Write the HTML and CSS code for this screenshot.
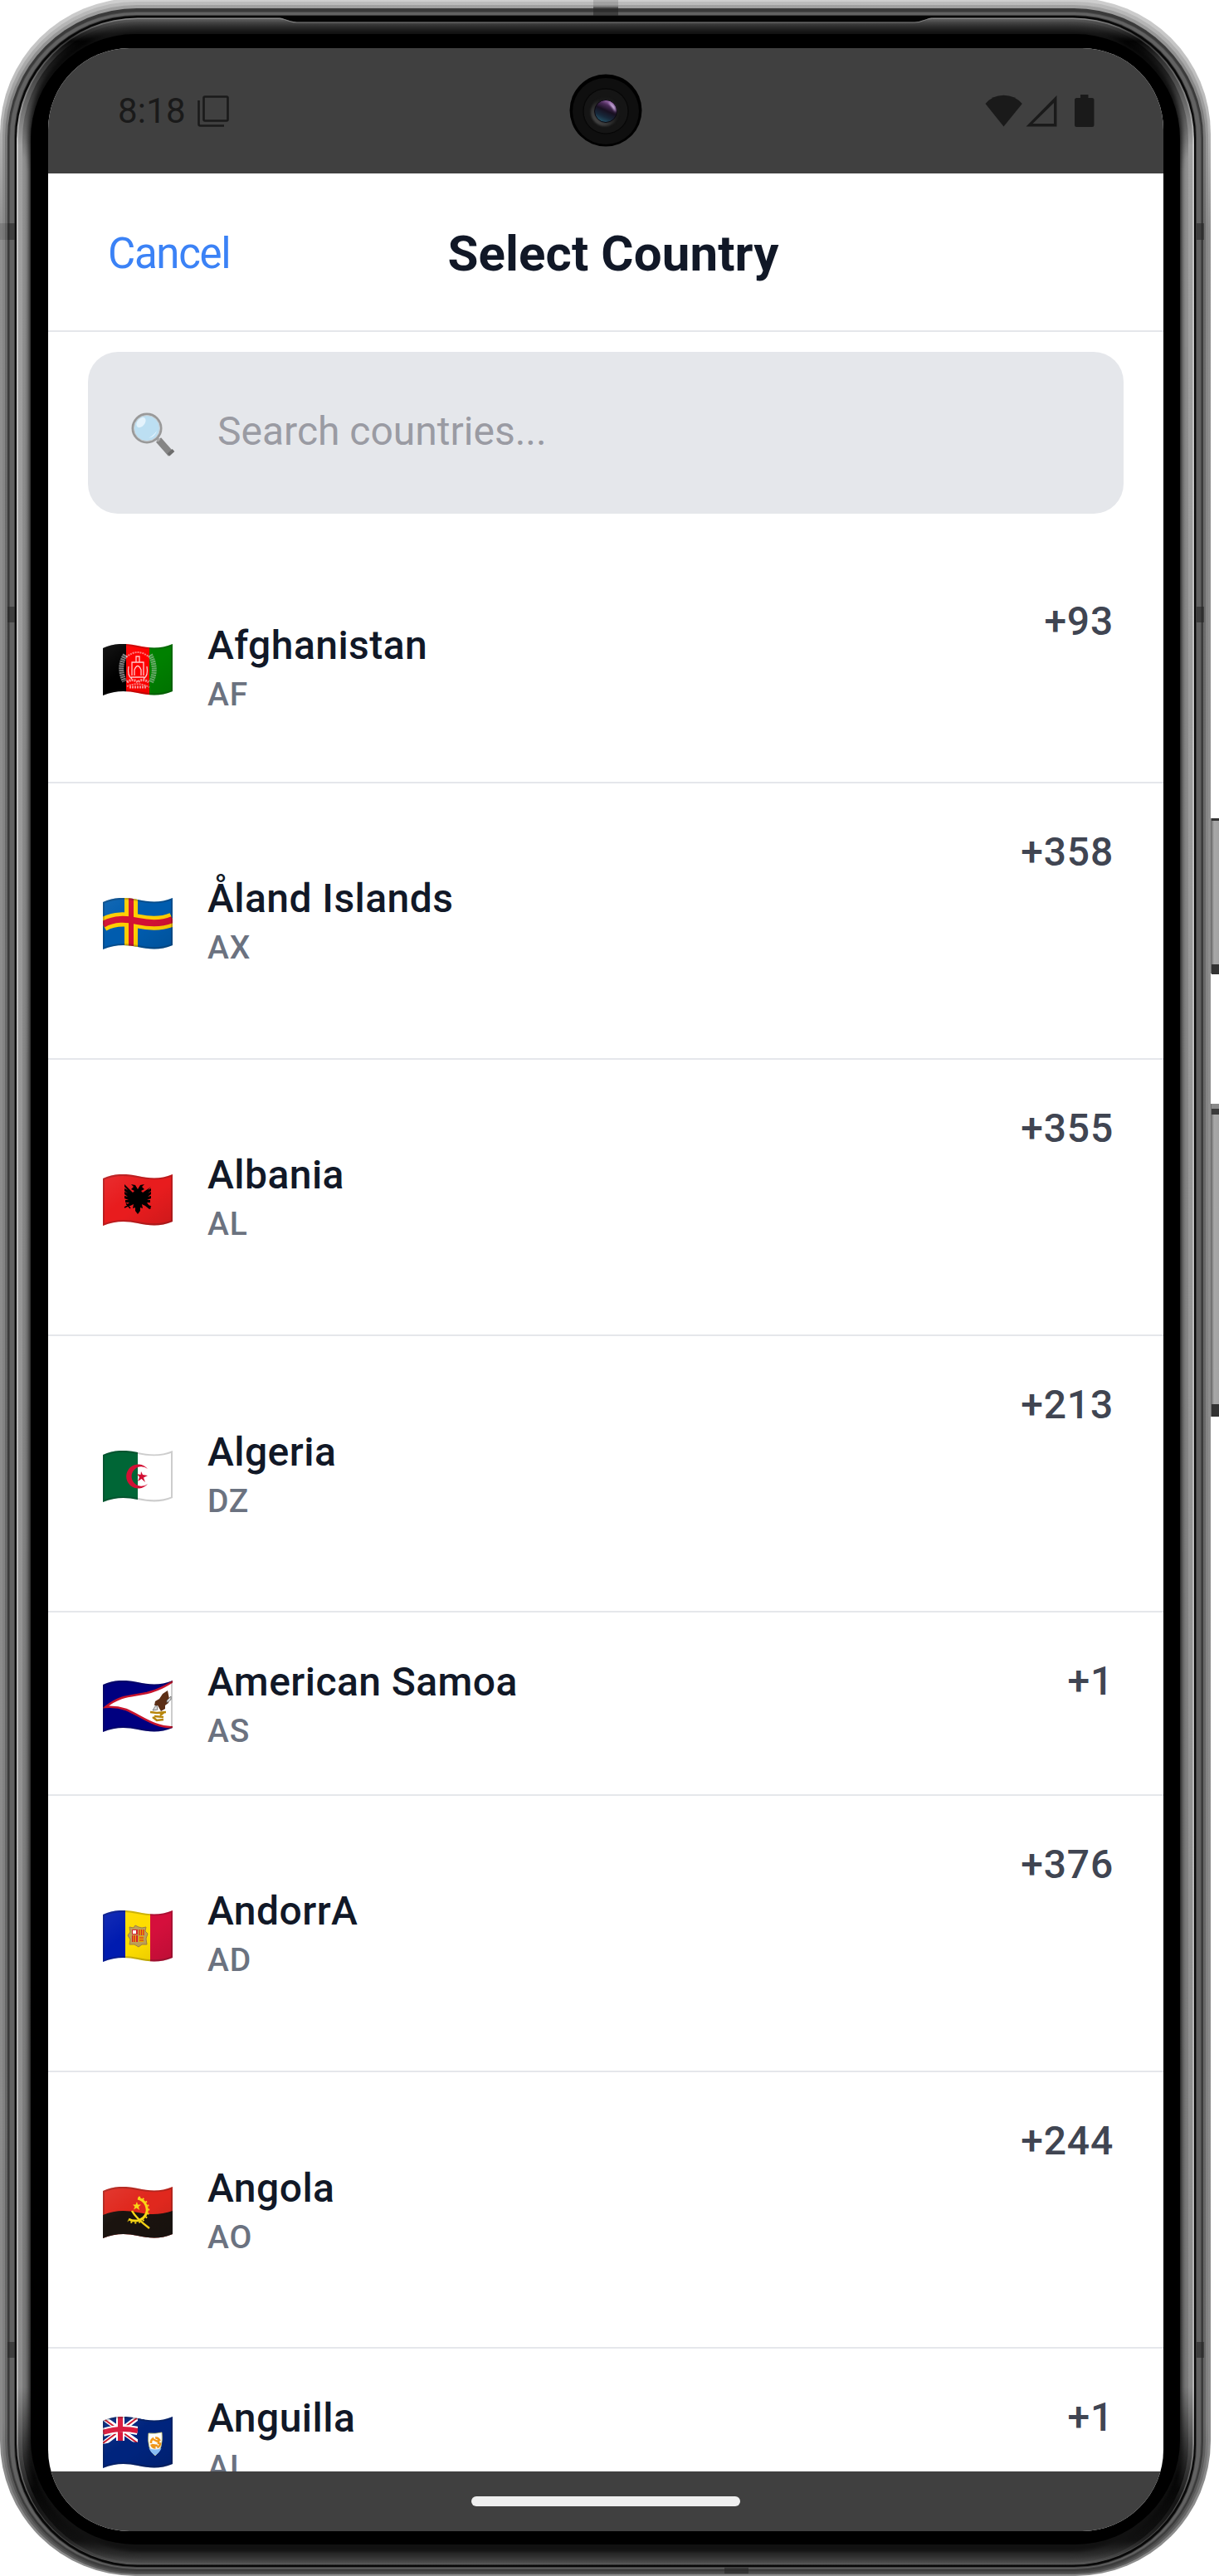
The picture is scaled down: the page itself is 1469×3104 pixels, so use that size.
FILE: index.html
```html
<!DOCTYPE html>
<html lang="en">
<head>
<meta charset="utf-8">
<title>Select Country</title>
<link rel="stylesheet" href="styles.css">
</head>
<body>
<div class="phone">
  <svg class="frame" viewBox="0 0 1469 3104" aria-hidden="true">
    <defs>
      <linearGradient id="key" x1="1459" x2="1469" y1="0" y2="0" gradientUnits="userSpaceOnUse"><stop offset="0" stop-color="#666"/><stop offset=".25" stop-color="#8c8c8c"/><stop offset=".4" stop-color="#a8a8a8"/><stop offset="1" stop-color="#a2a2a2"/></linearGradient>
      <linearGradient id="m0" x1="0" x2="0" y1="0" y2="3104" gradientUnits="userSpaceOnUse"><stop offset="0" stop-color="#cecece"/><stop offset=".045" stop-color="#b8b8b8"/><stop offset=".09" stop-color="#8f8f8f"/><stop offset=".94" stop-color="#8a8a8a"/><stop offset="1" stop-color="#8c8c8c"/></linearGradient>
      <linearGradient id="m1" x1="0" x2="0" y1="0" y2="3104" gradientUnits="userSpaceOnUse"><stop offset="0" stop-color="#bcbcbc"/><stop offset=".045" stop-color="#9a9a9a"/><stop offset=".09" stop-color="#868686"/><stop offset=".94" stop-color="#808080"/><stop offset="1" stop-color="#555"/></linearGradient>
      <linearGradient id="m2" x1="0" x2="0" y1="0" y2="3104" gradientUnits="userSpaceOnUse"><stop offset="0" stop-color="#a2a2a2"/><stop offset=".045" stop-color="#7c7c7c"/><stop offset=".09" stop-color="#6c6c6c"/><stop offset=".94" stop-color="#666"/><stop offset="1" stop-color="#444"/></linearGradient>
      <linearGradient id="g0" x1="0" x2="0" y1="22" y2="3091" gradientUnits="userSpaceOnUse"><stop offset="0" stop-color="#8a8a8a"/><stop offset=".008" stop-color="#333"/><stop offset=".016" stop-color="#555"/><stop offset=".05" stop-color="#c4c4c4"/><stop offset=".93" stop-color="#b4b4b4"/><stop offset=".98" stop-color="#444"/><stop offset="1" stop-color="#555"/></linearGradient>
      <linearGradient id="g1" x1="0" x2="0" y1="22" y2="3091" gradientUnits="userSpaceOnUse"><stop offset="0" stop-color="#5c5c5c"/><stop offset=".009" stop-color="#080808"/><stop offset=".017" stop-color="#333"/><stop offset=".05" stop-color="#a0a0a0"/><stop offset=".93" stop-color="#8c8c8c"/><stop offset=".975" stop-color="#151515"/><stop offset=".99" stop-color="#222"/><stop offset="1" stop-color="#585858"/></linearGradient>
      <linearGradient id="g2" x1="0" x2="0" y1="22" y2="3091" gradientUnits="userSpaceOnUse"><stop offset="0" stop-color="#545454"/><stop offset=".009" stop-color="#040404"/><stop offset=".022" stop-color="#222"/><stop offset=".055" stop-color="#929292"/><stop offset=".93" stop-color="#7c7c7c"/><stop offset=".97" stop-color="#080808"/><stop offset=".99" stop-color="#111"/><stop offset="1" stop-color="#505050"/></linearGradient>
      <linearGradient id="g3" x1="0" x2="0" y1="22" y2="3091" gradientUnits="userSpaceOnUse"><stop offset="0" stop-color="#404040"/><stop offset=".0095" stop-color="#020202"/><stop offset=".03" stop-color="#151515"/><stop offset=".06" stop-color="#707070"/><stop offset=".93" stop-color="#5a5a5a"/><stop offset=".965" stop-color="#040404"/><stop offset=".99" stop-color="#111"/><stop offset="1" stop-color="#404040"/></linearGradient>
      <linearGradient id="lensTint" x1=".8" y1="0" x2=".35" y2="1"><stop offset="0" stop-color="#c58ad8"/><stop offset=".28" stop-color="#4a2a58"/><stop offset=".5" stop-color="#171020"/><stop offset=".75" stop-color="#17283a"/><stop offset="1" stop-color="#245468"/></linearGradient>
      <linearGradient id="lensRim" x1="1" y1="0" x2="0" y2="1"><stop offset=".4" stop-color="#1a1a1a"/><stop offset="1" stop-color="#555"/></linearGradient>
    </defs>
    <g>
      <rect x="1459" y="986" width="10" height="187" fill="url(#key)"/>
      <rect x="1460" y="986" width="9" height="3" fill="#333"/><rect x="1460" y="1162" width="9" height="12" fill="#333"/>
      <rect x="1459" y="1330" width="10" height="377" fill="url(#key)"/>
      <rect x="1460" y="1330" width="9" height="6" fill="#8a8a8a"/><rect x="1460" y="1336" width="9" height="7" fill="#3a3a3a"/><rect x="1460" y="1692" width="9" height="15" fill="#333"/>
    </g>
    <rect x="0" y="-2" width="1459" height="3106" rx="163" fill="url(#m0)"/>
    <rect x="3" y="2" width="1453" height="3100" rx="161" fill="url(#m1)"/>
    <rect x="6" y="6" width="1447" height="3094" rx="159" fill="url(#m2)"/>
    <rect x="9" y="10" width="1441" height="3088" rx="156" fill="#3a3a3a"/>
    <rect x="11" y="14" width="1437" height="3082" rx="153" fill="#4c4c4c"/>
    <rect x="12" y="15" width="1435" height="3080" rx="152" fill="#626262"/>
    <rect x="17" y="18" width="1425" height="3076" rx="148" fill="#3c3c3c"/>
    <rect x="18" y="19" width="1423" height="3074" rx="147" fill="#080808"/>
    <rect x="20" y="21.500" width="1419" height="3069" rx="146" fill="url(#g0)"/>
    <rect x="22" y="23" width="1415" height="3067" rx="144" fill="url(#g1)"/>
    <rect x="27" y="26" width="1405" height="3062" rx="142" fill="url(#g2)"/>
    <g class="soft">
      <rect x="32" y="31" width="1395" height="3052" rx="138" fill="url(#g3)"/>
      <rect x="36" y="37" width="1387" height="3038" rx="134" fill="#111"/>
    </g>
    <rect x="37" y="41" width="1385" height="3025" rx="126" fill="#000"/>
    <path d="M335 20H1125L1118 22.500Q1112 26 1104 27H357Q350 26 344 23.500Z" fill="#040404"/>
    <path d="M336 22.500Q343 23 349 25.500Q353 27 358 27H1102Q1108 27 1112 25Q1118 22.500 1124 22.500" fill="none" stroke="#808080" stroke-width="1.200"/>
    <g fill="#222" fill-opacity=".55">
      <path d="M9 269h9v20H9zM1442 269h9v20h-9zM9 2822h9v19H9zM1442 2822h9v19h-9zM9 731h9v19H9zM1442 731h9v19h-9zM715 8h30v11h-30zM873 3094h29v7h-29z"/>
      <path d="M715 0h30v8h-30zM0 269h9v20H0z" fill-opacity=".16"/>
    </g>
  </svg>
  <main class="screen">
    <div class="status">
      <div class="clock">8:18
        <svg class="windows" viewBox="0 0 38 38"><path d="M1.500 6V34.500a2 2 0 0 0 2 2H32" /><rect x="7.500" y="1.500" width="29" height="29" rx="1.500"/></svg>
      </div>
      <svg class="signals" viewBox="0 0 132 40">
        <path d="M22.500 38.500L.5 11Q9 .7 22.500 .7T44.800 11Z"/>
        <path d="M86.500 1V38.500H49.500ZM83 10L57.500 35H83Z" fill-rule="evenodd"/>
        <path d="M115 0h9.500v4h4.500a2.500 2.500 0 0 1 2.500 2.500V36.500a2.500 2.500 0 0 1-2.500 2.500h-18.500a2.500 2.500 0 0 1-2.500-2.500V6.500a2.500 2.500 0 0 1 2.500-2.500H115z"/>
      </svg>
    </div>
    <header class="header">
      <span class="cancel">Cancel</span>
      <h1 class="title">Select Country</h1>
    </header>
    <div class="search">
      <svg class="glass" viewBox="0 0 54 54">
        <path d="M33 33L48 50" stroke="#858585" stroke-width="8"/><path d="M45 51L51 45.500" stroke="#6c6c6c" stroke-width="4"/>
        <path d="M29 29L34 34" stroke="#aaa" stroke-width="4"/>
        <circle cx="19" cy="19" r="17" fill="#bcdff2" stroke="#999" stroke-width="3"/><circle cx="19" cy="19" r="15.500" fill="none" stroke="#c9cdd0" stroke-width="1"/>
        <ellipse cx="12" cy="12" rx="4.500" ry="7" transform="rotate(38 12 12)" fill="#e4f3fc"/><path d="M21 31Q29 29 31 22Q27 28 21 31" fill="#e8f6ff"/>
      </svg>
      <span class="placeholder">Search countries...</span>
    </div>
    <svg class="defs" width="0" height="0" aria-hidden="true"><defs>
      <clipPath id="wave"><path d="M0 5C14-1.500 28-1 42 2S70 6 84 0V57C70 63 56 62 42 59S14 56 0 62Z"/></clipPath>
      <linearGradient id="shade" x1="0" y1="0" x2="1" y2="1"><stop offset="0" stop-color="#fff" stop-opacity=".08"/><stop offset=".4" stop-color="#fff" stop-opacity="0"/><stop offset=".55" stop-color="#000" stop-opacity="0"/><stop offset="1" stop-color="#000" stop-opacity=".12"/></linearGradient>
      <path id="edge" d="M0 5C14-1.500 28-1 42 2S70 6 84 0V57C70 63 56 62 42 59S14 56 0 62Z" fill="none" stroke="#1a1a1a" stroke-opacity=".22" stroke-width="4"/>
      <g id="gloss"><rect width="84" height="63" fill="url(#shade)"/><use href="#edge"/></g>
    </defs></svg>
    <ul class="list">
      <li class="row row-two">
        <svg class="flag" viewBox="0 0 84 63"><g clip-path="url(#wave)"><path fill="#000" d="M0 0h28v63H0z"/><path fill="#f00" d="M28 0h28v63H28z"/><path fill="#008000" d="M56 0h28v63H56z"/>
          <g fill="none" stroke="#fff"><path stroke="#aaa" stroke-opacity=".75" stroke-width="6" stroke-dasharray="2 .7" d="M27 13Q18 28 26 45"/><path stroke="#8cb98c" stroke-opacity=".75" stroke-width="6" stroke-dasharray="2 .7" d="M57 13Q66 30 58 46"/><path stroke-opacity=".5" stroke-width="2" stroke-dasharray="2 1" d="M28 16Q42 4 56 16M29 51Q42 45 56 52"/><path stroke-opacity=".8" stroke-width="1.300" d="M35 38V22H49V38M38 38V31Q42 22 46 31V38M40 22V15H44V22M34 40H50M31 27Q29 38 35 42M53 27Q55 38 49 42"/><path stroke-opacity=".6" stroke-width="3" stroke-dasharray="2 1" d="M29 46Q36 41 42 46Q48 41 55 46M32 52H53"/></g><use href="#gloss"/></g></svg>
        <div class="info"><span class="name">Afghanistan</span><span class="iso">AF</span></div><span class="dial">+93</span>
      </li>
      <li class="row row-three">
        <svg class="flag" viewBox="0 0 84 63"><g clip-path="url(#wave)"><path fill="#005cae" d="M0 0h84v63H0z"/><path fill="#ffce00" d="M26 0h16v63H26z"/><path d="M0 32C14 24 28 25 42 28S70 32 84 26" fill="none" stroke="#ffce00" stroke-width="17"/><path fill="#d21034" d="M31 0h6v63h-6z"/><path d="M0 32C14 24 28 25 42 28S70 32 84 26" fill="none" stroke="#d21034" stroke-width="8"/><use href="#gloss"/></g></svg>
        <div class="info"><span class="name">Åland Islands</span><span class="iso">AX</span></div><span class="dial">+358</span>
      </li>
      <li class="row row-three">
        <svg class="flag" viewBox="0 0 84 63"><g clip-path="url(#wave)"><path fill="#e81c1e" d="M0 0h84v63H0z"/><path d="M42 18L39 13L34 12L37 15L34 18L38 20L36 22L26 12V15L30 19L26 17V20L30 23L26 21V24L30 27L26 26V29L31 31L27 31V34L32 34L28 37L33 38L37 36L36 41L39 40V44L42 48L45 44V40L48 41L47 36L51 38L56 42L58 41L53 34L57 34V31L53 31L58 29V26L54 27L58 24V21L54 23L58 20V17L54 19L58 15L48 22L46 20L50 18L47 15L50 12L45 13Z"/><path d="M32 37L26 40M28 35L33 41M52 37L58 39" stroke="#000" stroke-width="1.500"/><use href="#gloss"/></g></svg>
        <div class="info"><span class="name">Albania</span><span class="iso">AL</span></div><span class="dial">+355</span>
      </li>
      <li class="row row-three">
        <svg class="flag" viewBox="0 0 84 63"><g clip-path="url(#wave)"><path fill="#006636" d="M0 0h42v63H0z"/><path fill="#fff" d="M42 0h42v63H42z"/><path fill="#d21034" d="M54 22A14.500 14.500 0 1 0 54 40A11.800 11.800 0 1 1 54 22ZM46 25L48 29L54 30L49 32.500L51 38L46.500 34L42 37L44 32L41 28L45.500 29Z"/><use href="#edge"/></g></svg>
        <div class="info"><span class="name">Algeria</span><span class="iso">DZ</span></div><span class="dial">+213</span>
      </li>
      <li class="row row-one">
        <svg class="flag" viewBox="0 0 84 63"><g clip-path="url(#wave)"><path fill="#000080" d="M0 0h84v63H0z"/><path fill="#fff" stroke="#c8142c" stroke-width="2.500" d="M3 32C22 17 34 19 53 15Q70 11 86 0V56C64 58 45 42 28 35Q16 31 3 32Z"/><path fill="#5c2f16" d="M78 12L80 22L79 27L75 30L75 34L70 37L66 30L62 30L63 25L68 22L72 16Z"/><path fill="#ddd" stroke="#555" stroke-width=".7" d="M77 24L82 19V23L77 27ZM63 31L60 36L66 35L65 30Z"/><path fill="none" stroke="#b8860b" stroke-width="2.500" d="M57 38L65 39L76 38M60 44L65 48L73 47M74 38L69 42M62 43L73 44"/><use href="#edge"/></g></svg>
        <div class="info"><span class="name">American Samoa</span><span class="iso">AS</span></div><span class="dial">+1</span>
      </li>
      <li class="row row-three">
        <svg class="flag" viewBox="0 0 84 63"><g clip-path="url(#wave)"><path fill="#001bb0" d="M0 0h27v63H0z"/><path fill="#fedd00" d="M27 0h30v63H27z"/><path fill="#d50f3c" d="M57 0h27v63H57z"/><path fill="#bda05a" stroke="#a08040" d="M32 20L37 21L39 18L43 20L47 21L52 20L51 25L54 28L52 34L53 41L47 41L43 44L38 41L32 41L33 35L30 30L33 26Z"/><path fill="#d4232e" d="M35 23h7v6h-7zM35 30h7v8h-7z"/><path fill="#fff" d="M36 24h4v4h-4z"/><path fill="#e8a800" d="M43 23h7v7h-7zM43 31h6v7h-6z"/><path stroke="#d4232e" stroke-width="1.200" d="M44 23v7M46.500 23v7M49 23v7M44 33h5M44 36h5"/><path stroke="#f0b800" d="M37 30v8M39.500 30v8"/><use href="#gloss"/></g></svg>
        <div class="info"><span class="name">AndorrA</span><span class="iso">AD</span></div><span class="dial">+376</span>
      </li>
      <li class="row row-three">
        <svg class="flag" viewBox="0 0 84 63"><g clip-path="url(#wave)"><path fill="#e0281e" d="M0 0h84v63H0z"/><path fill="#1a130f" d="M0 34C14 28 28 28 42 31S70 34 84 29V63H0Z"/><path fill="none" stroke="#f9d616" stroke-width="3" d="M42 14C52 16 55 27 52 33S41 44 31 39"/><path fill="none" stroke="#f9d616" stroke-width="2" stroke-dasharray="2 3" d="M43 12.500C55 15 57 27 54 34S41 47 30 41"/><path stroke="#f9d616" stroke-width="2.500" fill="none" d="M35 29Q40 38 56 50"/><path fill="#f9d616" d="M41 18L42 21.500L46 21.500L43 24L44 28L40.500 25.500L37 27.500L38.500 24L36 21.500L39.500 21.500Z"/><use href="#gloss"/></g></svg>
        <div class="info"><span class="name">Angola</span><span class="iso">AO</span></div><span class="dial">+244</span>
      </li>
      <li class="row row-one">
        <svg class="flag" viewBox="0 0 84 63"><g clip-path="url(#wave)"><path fill="#00247d" d="M0 0h84v63H0z"/><path fill="none" stroke="#fff" stroke-width="6" d="M0 1L42 31M0 33L42 1"/><path fill="none" stroke="#cf142b" stroke-width="2" d="M0 2L42 32M0 32L42 1"/><path fill="none" stroke="#fff" stroke-width="10" d="M21 0V29M0 19Q20 12 42 17"/><path fill="none" stroke="#d8173a" stroke-width="6" d="M21 0V29M0 19Q20 12 42 17"/><path fill="#00247d" d="M42 0H50V33H42ZM0 33L20 29L42 31V36H0Z"/><path fill="#fff" stroke="#d8d47a" stroke-width=".8" d="M55 20Q63 21 71 19Q73 39 63 47Q53 40 55 20Z"/><path fill="#8cc4ff" d="M55.500 38Q63 41 70.500 38Q68 44 63 46.500Q58 44 55.500 38Z"/><path fill="none" stroke="#f59a1a" stroke-width="2.500" stroke-dasharray="7 2" d="M58 32A5.500 6 0 1 1 69 31A5.500 6 0 1 1 58 32M60 27L66 30M67 26L67 33M59 34L66 35"/><use href="#gloss"/></g></svg>
        <div class="info"><span class="name">Anguilla</span><span class="iso">AI</span></div><span class="dial">+1</span>
      </li>
    </ul>
    <footer class="nav"><div class="pill"></div></footer>
    <svg class="camera" viewBox="0 0 88 88">
      <circle cx="44" cy="44" r="43.500" fill="#000"/><circle cx="44" cy="45" r="40" fill="#0f0f0f"/><circle cx="44" cy="45" r="28" fill="#0c0c0c"/><circle cx="44" cy="45" r="27" fill="#151515" stroke="#060606"/><circle cx="43" cy="46" r="17" fill="url(#lensRim)" class="rim"/><circle cx="44" cy="45" r="13.500" fill="url(#lensTint)" stroke="#0b0810"/><path d="M47 34Q56 37 56 46Q53 42 47 34" fill="#dcc4f0" class="glint"/>
    </svg>
  </main>
</div>
</body>
</html>
```
FILE: styles.css
```css
* { box-sizing: border-box; }
body { margin: 0; background: #fff; font-family: Roboto, sans-serif; }
.phone { position: relative; width: 1469px; height: 3104px; padding: 58px 67px 54px 58px; overflow: hidden; }
.frame { position: absolute; inset: 0; width: 1469px; height: 3104px; }
.soft { filter: blur(2px); }
.screen { position: relative; display: flex; flex-direction: column; width: 1344px; height: 2992px; border-radius: 98px; background: #fff; overflow: hidden; }
.status { display: flex; align-items: center; justify-content: space-between; flex: none; height: 151px; padding: 0 83px 0 84px; background: #404040; color: #1a1a1a; }
.clock { display: flex; align-items: center; gap: 14px; font-size: 42px; letter-spacing: 0.2px; }
.windows { width: 38px; height: 38px; fill: none; stroke: #1a1a1a; stroke-width: 2.6; }
.signals { width: 132px; height: 40px; fill: #1a1a1a; }
.camera { position: absolute; left: 628px; top: 31px; width: 88px; height: 88px; }
.rim, .glint { filter: blur(1px); }
.header { display: grid; grid-template-columns: 1fr auto 1fr; align-items: center; flex: none; height: 191px; padding: 3px 54px 0 72px; border-bottom: 2px solid #e5e7eb; }
.cancel { font-size: 51px; letter-spacing: -1.3px; color: #3b82f6; }
.title { margin: 0; font-size: 60px; font-weight: 700; letter-spacing: 0.1px; color: #111827; }
.search { display: flex; align-items: center; flex: none; gap: 50px; height: 195px; margin: 24px 48px 47px; padding: 0 52px; border-radius: 36px; background: #e5e7eb; }
.glass { width: 54px; height: 54px; margin-top: 4px; fill: none; }
.placeholder { margin-bottom: 4px; font-size: 48px; color: #9a9ba3; }
.defs { position: absolute; }
.list { flex: 1; min-height: 0; margin: 0; padding: 0; list-style: none; overflow: hidden; }
.row { display: flex; align-items: center; padding: 0 60px 0 66px; border-bottom: 2px solid #e5e7eb; }
.row-one { height: 220.4px; }
.row-two { height: 277.5px; }
.row-three { height: 333.3px; }
.flag { flex: none; width: 84px; height: 63px; margin: 8px 42px 0 0; }
.info { display: flex; flex: 1; flex-direction: column; }
.name { font-size: 48px; line-height: 60px; font-weight: 500; letter-spacing: 0.45px; color: #111827; }
.iso { padding-top: 3px; margin-bottom: -3px; font-size: 39px; line-height: 52px; font-weight: 500; letter-spacing: 0.8px; color: #6b7280; }
.dial { align-self: flex-start; padding-top: 53px; font-size: 48px; line-height: 60px; font-weight: 500; letter-spacing: 0.8px; color: #404552; }
.nav { display: flex; align-items: center; justify-content: center; flex: none; height: 72px; background: #404040; }
.pill { width: 324px; height: 12px; border-radius: 6px; background: #efefef; }
```
